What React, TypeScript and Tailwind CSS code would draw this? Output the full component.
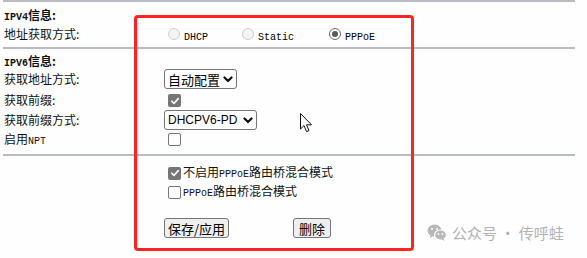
import React from "react";

const cjk = "font-['Noto_Sans_CJK_SC',sans-serif]";
const mono = "font-['Liberation_Mono','Noto_Sans_CJK_SC',monospace]";

const Latin = ({ children, size = "text-[10px]", bold = false }: { children: React.ReactNode; size?: string; bold?: boolean }) => (
  <span className={`${mono} ${size} ${bold ? "font-bold" : ""}`}>{children}</span>
);

const Radio = ({ checked = false }: { checked?: boolean }) => (
  <span
    className={`inline-flex w-[12px] h-[12px] rounded-full border items-center justify-center shrink-0 ${
      checked ? "border-[#6b6b6b] bg-white" : "border-[#cfcfcf] bg-[#f4f4f4]"
    }`}
  >
    {checked && <span className="w-[6px] h-[6px] rounded-full bg-[#5a5a5a]" />}
  </span>
);

const Checkbox = ({ checked = false }: { checked?: boolean }) =>
  checked ? (
    <span className="inline-flex w-[13px] h-[13px] rounded-[2px] bg-[#767676] items-center justify-center shrink-0">
      <svg width="10" height="10" viewBox="0 0 10 10">
        <path d="M1.8 5.2 L4 7.4 L8.3 2.6" fill="none" stroke="white" strokeWidth="1.6" strokeLinecap="round" strokeLinejoin="round" />
      </svg>
    </span>
  ) : (
    <span className="inline-block w-[13px] h-[13px] rounded-[2px] border border-[#767676] bg-white shrink-0" />
  );

const Chevron = () => (
  <svg width="10" height="7" viewBox="0 0 10 7" className="shrink-0">
    <path d="M1.5 1.5 L5 5 L8.5 1.5" fill="none" stroke="#111" strokeWidth="2.2" strokeLinecap="round" strokeLinejoin="round" />
  </svg>
);

const Select = ({ children, width }: { children: React.ReactNode; width: string }) => (
  <div className={`${width} h-[20px] flex items-center justify-between border border-[#767676] rounded-[3px] bg-white pl-[3px] pr-[3px] text-[13px] text-black whitespace-nowrap`}>
    {children}
    <Chevron />
  </div>
);

const Divider = () => <div className="h-[2px] bg-[#b9bcc2] w-[572px] ml-[3px]" />;

const Row = ({ label, h, children }: { label: React.ReactNode; h: string; children?: React.ReactNode }) => (
  <div className={`flex items-center ${h}`}>
    <div className={`w-[164px] pl-[4px] text-[12px] leading-none text-[#111] ${cjk}`}>{label}</div>
    <div className="flex items-center">{children}</div>
  </div>
);

const WeChat = () => (
  <svg width="20" height="17" viewBox="0 0 20 17">
    <ellipse cx="7.5" cy="6.5" rx="7" ry="6" fill="#b8b8b8" />
    <path d="M3.5 11 L2.8 14 L6.5 12" fill="#b8b8b8" />
    <ellipse cx="13.5" cy="11" rx="6" ry="5" fill="#b8b8b8" stroke="#fdfefd" strokeWidth="1.2" />
    <path d="M16.5 14.5 L17.5 16.8 L14.2 15.6" fill="#b8b8b8" />
    <circle cx="5" cy="5" r="1" fill="#fdfefd" />
    <circle cx="10" cy="5" r="1" fill="#fdfefd" />
    <circle cx="11.5" cy="10" r="0.9" fill="#fdfefd" />
    <circle cx="15.5" cy="10" r="0.9" fill="#fdfefd" />
  </svg>
);

const App = () => {
  return (
    <div className="relative w-[587px] h-[258px] bg-[#fdfefd] overflow-hidden">
      <Divider />

      {/* IPV4 */}
      <div className="h-[45px] pt-[5px]">
        <Row h="h-[18px]" label={<span className="font-bold"><Latin bold>IPV4</Latin>信息:</span>} />
        <Row h="h-[18px]" label="地址获取方式:">
          <div className="ml-[4px] flex items-center">
            <Radio />
            <span className="ml-[4px] w-[58px]"><Latin>DHCP</Latin></span>
            <Radio />
            <span className="ml-[4px] w-[71px]"><Latin>Static</Latin></span>
            <Radio checked />
            <span className="ml-[4px]"><Latin>PPPoE</Latin></span>
          </div>
        </Row>
      </div>

      <Divider />

      {/* IPV6 */}
      <div className="h-[105px] pt-[5px]">
        <Row h="h-[15px]" label={<span className="font-bold"><Latin bold>IPV6</Latin>信息:</span>} />
        <Row h="h-[20px]" label="获取地址方式:">
          <Select width="w-[73px]">
            <span className={`${cjk} leading-none`}>自动配置</span>
          </Select>
        </Row>
        <Row h="h-[21px]" label="获取前缀:">
          <span className="ml-[4px]"><Checkbox checked /></span>
        </Row>
        <Row h="h-[20px]" label="获取前缀方式:">
          <Select width="w-[93px]">
            <span className="font-['Liberation_Sans',sans-serif] text-[12px] leading-none">DHCPV6-PD</span>
          </Select>
        </Row>
        <Row h="h-[20px]" label={<>启用<Latin>NPT</Latin></>}>
          <span className="ml-[4px]"><Checkbox /></span>
        </Row>
      </div>

      <Divider />

      {/* options */}
      <div className={`pl-[168px] pt-[8px] text-[12px] leading-none text-[#111] ${cjk}`}>
        <div className="h-[18px] flex items-center gap-[2px]">
          <Checkbox checked />
          <span>不启用<Latin>PPPoE</Latin>路由桥混合模式</span>
        </div>
        <div className="h-[20px] flex items-center gap-[2px]">
          <Checkbox />
          <span><Latin>PPPoE</Latin>路由桥混合模式</span>
        </div>
        <div className="mt-[16px] -ml-[4px] flex items-center">
          <button className="w-[65px] h-[20px] bg-[#efefef] border border-[#767676] rounded-[3px] text-[13px] leading-none text-black">
            保存/应用
          </button>
          <button className="ml-[64px] w-[38px] h-[20px] bg-[#efefef] border border-[#767676] rounded-[3px] text-[13px] leading-none text-black">
            删除
          </button>
        </div>
      </div>

      {/* annotation box */}
      <div className="absolute left-[134px] top-[15px] w-[280px] h-[236px] border-[3px] border-[#ff2424] rounded-[4px] pointer-events-none" />

      {/* mouse cursor */}
      <svg className="absolute left-[300px] top-[113px]" width="13" height="20" viewBox="0 0 13 20">
        <path d="M0.5 0.5 L0.5 16 L4 12.6 L6.6 18.6 L9 17.6 L6.5 11.8 L11.5 11.8 Z" fill="white" stroke="#111" strokeWidth="1" strokeLinejoin="round" />
      </svg>

      {/* watermark */}
      <div className="absolute left-[427px] top-[224px] flex items-center gap-[5px]">
        <WeChat />
        <span className={`${cjk} text-[15px] leading-none text-[#b3b3b3]`}>公众号 · 传呼蛙</span>
      </div>
    </div>
  );
};

export default App;
